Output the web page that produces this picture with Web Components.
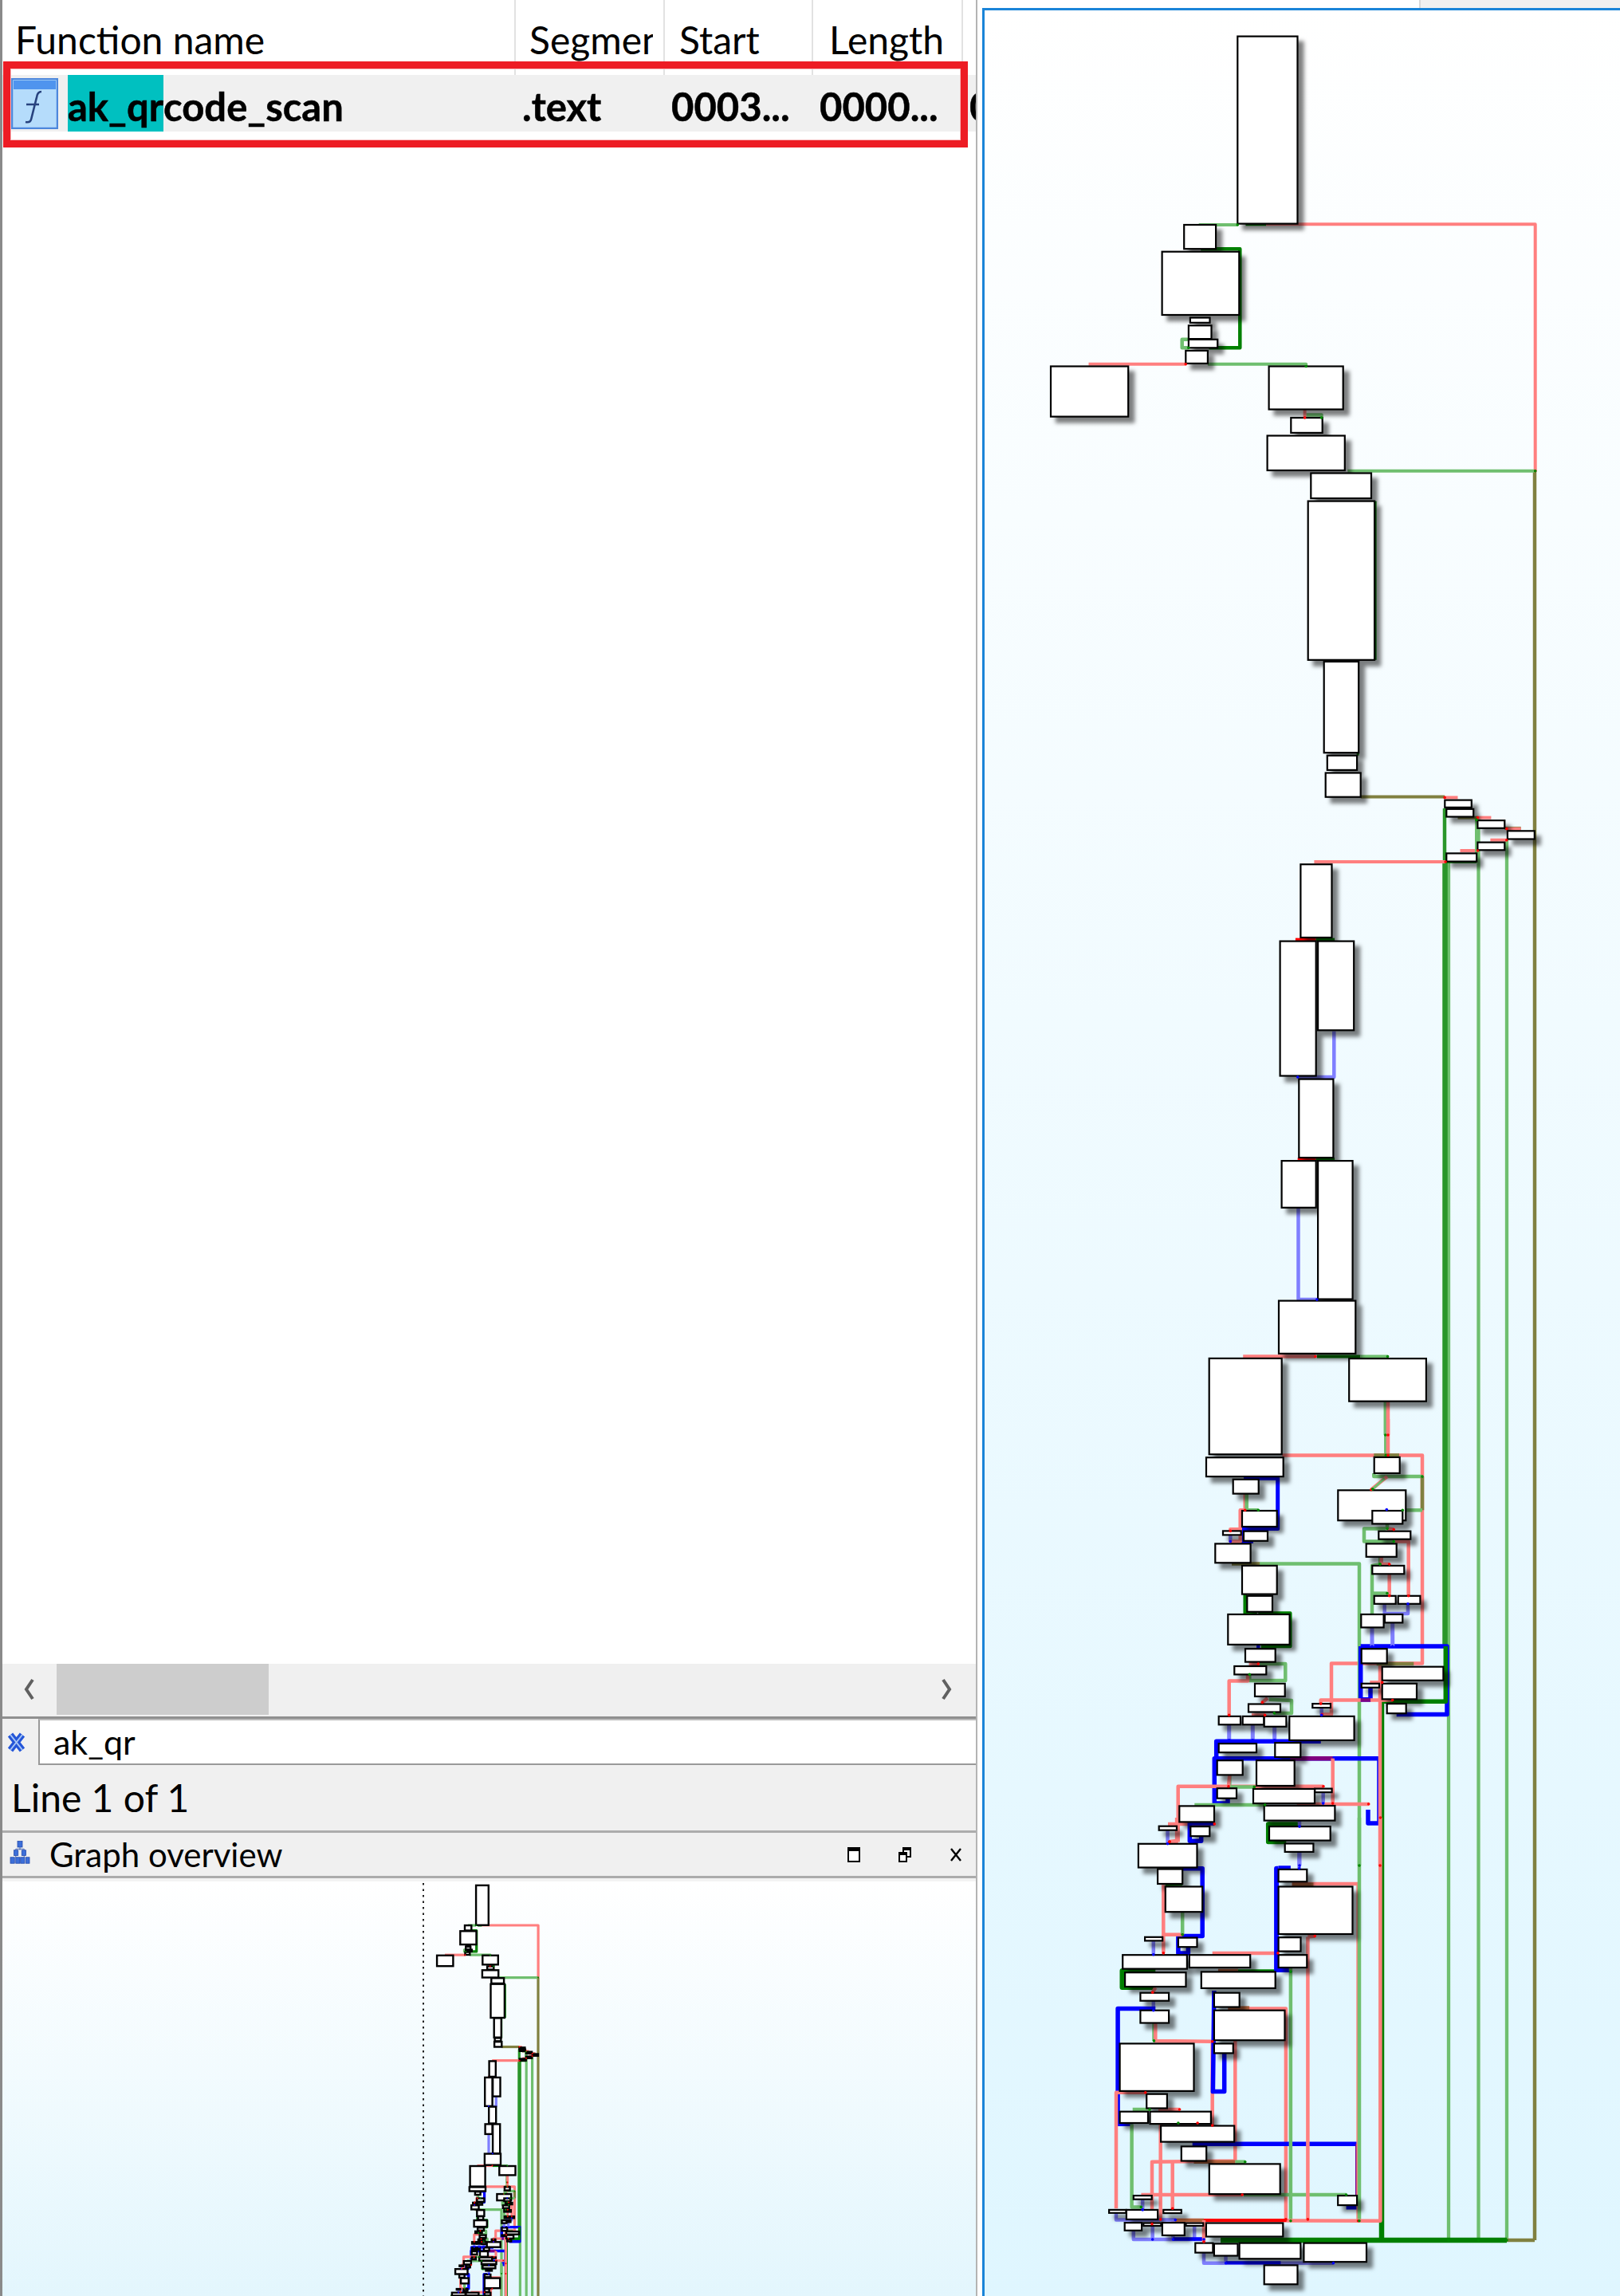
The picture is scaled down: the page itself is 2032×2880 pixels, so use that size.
<!DOCTYPE html>
<html><head><meta charset="utf-8">
<style>
html,body{margin:0;padding:0;background:#fff;}
body{width:2032px;height:2880px;overflow:hidden;display:flex;font-family:Lato,"Liberation Sans",sans-serif;color:#000;}
#left{width:1226px;height:2880px;display:flex;flex-direction:column;flex:none;box-sizing:border-box;border-left:3px solid #8a8a8a;border-right:2px solid #b4b4b4;}
</style></head><body>
<div id="left">
  <func-table>
    <func-row-head slot="head"></func-row-head>
  </func-table>
  <h-scroll></h-scroll>
  <filter-bar>ak_qr</filter-bar>
  <status-line>Line 1 of 1</status-line>
  <panel-title>Graph overview</panel-title>
  <flow-graph mode="overview"></flow-graph>
</div>
<graph-pane><flow-graph mode="main"></flow-graph></graph-pane>
<script>
const def=(name,html)=>customElements.define(name,class extends HTMLElement{constructor(){super();this.attachShadow({mode:'open'}).innerHTML=html;}});

def('func-row-head',`<style>
:host{display:grid;grid-template-columns:644px 187px 186px 188px 1fr;height:94px;font-size:48px;line-height:1;}
div{border-right:2px solid #e2e2e2;overflow:hidden;white-space:nowrap;padding:26px 0 0 18px;box-sizing:border-box;}
div:nth-of-type(1){padding-left:16px}
div:nth-of-type(2){padding-left:17px}
div:nth-of-type(2) span{display:block;width:155px;overflow:hidden;padding-bottom:12px;}
div:nth-of-type(4){padding-left:20px}
div:nth-of-type(5){border:0}
</style><div>Function name</div><div><span>Segment</span></div><div>Start</div><div>Length</div><div></div>`);

def('func-table',`<style>
:host{display:block;height:2087px;flex:none;position:relative;background:#fff;font-size:49px;}
.row{display:grid;grid-template-columns:644px 187px 186px 188px 1fr;height:71px;background:#f0f0f0;font-weight:700;line-height:78px;white-space:nowrap;overflow:hidden;-webkit-text-stroke:.5px #000;}
.row>div{padding-left:8px;overflow:hidden;}
.name{display:flex;padding-left:11px !important;align-items:stretch;}
.name svg{width:59px;height:64px;margin:4px 12px 0 0;flex:none;}
mark{background:#00c0c0;color:inherit;display:block;height:71px;}
.mark{position:absolute;left:1px;top:77px;width:1210px;height:108px;box-sizing:border-box;border:9px solid #ed1c24;outline:0;box-shadow:inset 0 0 0 1px #f7b9bb;}
</style><slot name="head"></slot>
<div class="row"><div class="name"><svg viewBox="0 0 59 64"><rect x="1" y="1" width="57" height="62" fill="#b5dcfb" stroke="#4d87dc" stroke-width="2.5"/><rect x="3" y="3" width="53" height="11" fill="#4f94ee"/><path d="M38 17Q33 17 32 24L25 52Q24 56 18 55M19 33H35" fill="none" stroke="#27427e" stroke-width="2.6"/></svg><mark>ak_qr</mark><span>code_scan</span></div><div>.text</div><div>0003...</div><div>0000...</div><div>0</div></div>
<div class="mark"></div>`);

def('h-scroll',`<style>
:host{display:flex;height:69px;flex:none;box-sizing:border-box;background:#f0f0f0;border-bottom:3px solid #8f8f8f;align-items:stretch;padding-bottom:2px;}
svg{width:68px;flex:none;}
.thumb{width:266px;background:#cdcdcd;flex:none}
.sp{flex:1}
</style><svg viewBox="0 0 68 64"><path d="M38 20L30 32L38 44" fill="none" stroke="#606060" stroke-width="4"/></svg><div class="thumb"></div><div class="sp"></div><svg viewBox="0 0 68 64"><path d="M27 20L35 32L27 44" fill="none" stroke="#606060" stroke-width="4"/></svg>`);

def('filter-bar',`<style>
:host{display:flex;height:58px;flex:none;background:#f0f0f0;align-items:stretch;font-size:43px;}
svg{width:45px;flex:none;}
.in{flex:1;background:#fff;border:2px solid #999;border-right:0;border-top-color:#bbb;box-sizing:border-box;padding-left:17px;line-height:54px;}
</style><svg viewBox="0 0 45 58"><path d="M10 20L25 39M25 20L10 39" stroke="#2456d8" stroke-width="8" fill="none"/><path d="M10 20L25 39M25 20L10 39" stroke="#a8c6f5" stroke-width="2" fill="none"/></svg><div class="in"><slot></slot></div>`);

def('status-line',`<style>
:host{display:block;height:82px;flex:none;box-sizing:border-box;background:#f0f0f0;font-size:48px;line-height:82px;padding-left:11px;}
</style><slot></slot>`);

def('panel-title',`<style>
:host{display:flex;height:60px;flex:none;box-sizing:border-box;background:#f0f0f0;border-top:3px solid #acacac;border-bottom:3px solid #acacac;align-items:center;font-size:42px;}
.ic{width:30px;height:30px;margin:0 22px 6px 7px;flex:none;}
.t{flex:1;line-height:54px;}
.b{display:flex;gap:0;align-items:center;}
.b svg{width:20px;height:20px;flex:none;}
</style><svg class="ic" viewBox="0 0 34 40"><g fill="#3d6fd9" stroke="#1f45a8" stroke-width="1"><rect x="13" y="2" width="8" height="10"/><rect x="7" y="17" width="7" height="9"/><rect x="20" y="17" width="7" height="9"/><rect x="1" y="29" width="7" height="10"/><rect x="10" y="29" width="7" height="10"/><rect x="18" y="29" width="7" height="10"/><rect x="27" y="29" width="6" height="10"/></g><path d="M17 12V17M10 26V29M24 26V29M10 17V15H24V17" stroke="#1f45a8" fill="none"/></svg><div class="t"><slot></slot></div><div class="b"><svg viewBox="0 0 20 20" style="margin-right:44px"><rect x="3" y="2" width="14" height="17" fill="#fff" stroke="#000" stroke-width="2"/><rect x="3" y="2" width="14" height="4"/></svg><svg viewBox="0 0 20 20" style="margin-right:44px"><rect x="8" y="2" width="9" height="11" fill="#fff" stroke="#000" stroke-width="2"/><rect x="8" y="2" width="9" height="3"/><rect x="3" y="8" width="9" height="11" fill="#fff" stroke="#000" stroke-width="2"/><rect x="3" y="8" width="9" height="3"/></svg><svg viewBox="0 0 20 20" style="margin-right:15px"><path d="M4 3L16 18M16 3L4 18" stroke="#000" stroke-width="2.4"/></svg></div>`);

def('graph-pane',`<style>
:host{display:block;flex:none;width:800px;height:2880px;margin-left:6px;padding-top:10px;box-sizing:border-box;position:relative;background:#fff;}
.tab{position:absolute;right:0;top:0;width:252px;height:10px;background:#f0f0f0;border-left:2px solid #d8d8d8;box-sizing:border-box;}
.f{box-sizing:border-box;height:2870px;border-left:3px solid #1a84d8;border-top:3px solid #1a84d8;background:linear-gradient(#fff,#dff6ff);overflow:hidden;}
</style><div class="tab"></div><div class="f"><slot></slot></div>`);

const Z={z4:[1230,0,1.955,1.4255],z5:[1400,1000,2.481,1.96],z6:[1360,1780,3,2.8],z7:[1360,2280,2.8,2.59],f:[0,0,1,1]};
const NODES={
z4:[[630,65,777,400],[499,402,577,445],[445,450,634,563],[514,568,562,577],[510,582,566,606],[510,607,581,622],[503,627,557,650],[172,655,362,745],[707,655,889,732],[761,747,838,774],[703,779,893,841],[810,846,958,891],[803,896,966,1180],[842,1183,927,1346],[850,1351,923,1377],[846,1382,932,1425]],
z5:[[574,165,671,345],[510,354,622,685],[628,354,740,573],[569,693,676,886],[515,894,622,1009],[628,894,736,1234],[506,1238,745,1368],[725,1380,965,1485],[1023,7,1106,25],[1028,29,1112,48],[1125,57,1209,76],[1218,83,1302,103],[1125,111,1209,130],[1028,138,1122,158]],
z6:[[470,-213,743,124],[459,135,749,202],[560,212,656,262],[594,322,725,378],[522,393,590,407],[600,394,690,428],[493,438,626,505],[594,515,725,615],[613,621,708,677],[541,686,773,792],[606,807,719,853],[565,868,685,897],[642,929,755,974],[618,1001,738,1029],[506,1044,588,1073],[596,1044,676,1073],[677,1044,760,1080],[772,1044,1016,1128],[506,1140,648,1171],[718,1137,814,1187],[500,1199,596,1250],[648,1199,791,1288],[500,1297,573,1332],[636,1299,867,1350],[868,1298,932,1311],[358,1359,489,1415],[677,1358,943,1410],[696,1431,926,1480],[755,1491,862,1520],[281,1430,348,1444],[400,1431,472,1465],[1091,134,1187,190],[955,250,1210,356],[1084,322,1198,368],[1108,394,1228,422],[1061,438,1175,484],[1084,515,1204,544],[1091,621,1172,649],[1181,621,1264,649],[1042,686,1127,732],[1131,686,1198,715],[1043,807,1139,858],[1121,870,1351,918],[1043,929,1110,943],[1121,929,1251,984],[1139,1000,1211,1034],[859,1000,927,1014]],
z7:[[190,85,396,162],[258,167,345,215],[285,224,415,306],[213,388,275,400],[330,390,396,420],[135,446,361,491],[369,446,583,487],[143,503,357,549],[411,501,671,554],[197,569,297,595],[197,626,297,667],[125,734,385,888],[219,898,291,944],[125,955,224,992],[231,955,445,995],[269,1001,527,1053],[341,1068,429,1115],[439,1125,688,1223],[173,1228,237,1240],[891,1228,958,1259],[87,1274,147,1284],[148,1274,258,1305],[278,1274,341,1285],[142,1316,202,1341],[208,1317,270,1326],[274,1316,352,1357],[357,1317,418,1326],[428,1317,698,1361],[390,1382,452,1413],[456,1384,539,1423],[545,1382,760,1433],[771,1382,991,1443],[632,1454,749,1516],[682,168,782,208],[682,224,942,378],[682,389,760,434],[682,446,782,487],[456,569,545,615],[456,626,704,723],[456,734,523,765]]
};
const C={r:'#ff7f7f',g:'#6fbf6f',b:'#7f7fff',B:'#0000ff',G:'#008000',o:'#808040',R:'#ff0000',p:'#800080',T:'#2a962a',n:'#b0603a'};
const EDGES=[
['f','g',2.8,'1817,1081 1817,2810'],['f','g',2.8,'1854.5,1025 1854.5,2810'],['f','g',2.8,'1890,1052 1890,2810'],
['f','o',3,'1925,590 1925,2810'],['f','T',3,'1812,1014 1812,1081'],['f','T',5,'1812.5,1081 1812.5,2065'],
['f','G',5,'1733,2134 1733,2810'],['f','G',5,'1531,2810 1890,2810'],['f','o',3,'1890,2810 1925,2810'],
['z4','g',2.5,'535,402 630,402'],['z4','G',2.5,'650,401 700,401'],['z4','r',2.5,'700,401 1360,401 1360,842'],['z4','g',2.5,'900,842 1360,842'],
['z4','G',3,'540,445 636,445 636,622 560,622'],['z4','g',3,'510,607 494,607 494,622 510,622'],
['z4','r',2.5,'265,651 503,651'],['z4','g',2.5,'557,651 798,651 798,655'],['z4','g',3,'798,742 836,742 836,747'],['z4','r',2.5,'795,732 795,747'],
['z4','o',2.5,'932,1425 1138,1425'],['z4','r',2.5,'1170,1426 1138,1426'],['z4','G',1.5,'968,896 968,1180'],['z4','G',1.5,'925,1183 925,1351'],
['z4','o',2.5,'1170,1462 1219,1462'],['z4','r',2.5,'1252,1462 1219,1462'],['z4','o',2.5,'1285,1481 1325,1481'],['z4','r',2.5,'1325,1482 1290,1482'],['z4','r',2.5,'1250,1502 1290,1502'],['z4','r',2.5,'1176,1521 1219,1521'],['z4','r',2.5,'818,1541 1140,1541'],
['z4','g',2.5,'1216,1540 1216,1466'],['z4','G',2,'1142,1541 1216,1541'],
['z5','R',2.5,'558,350 622,350'],['z5','G',2.5,'622,350 680,350'],['z5','R',2.5,'565,890 622,890'],['z5','G',2.5,'622,890 680,890'],
['z5','b',3,'678,575 678,688 565,688'],['z5','b',3,'567,1010 567,1235 625,1235'],
['z5','r',3,'395,1375 620,1375'],['z5','G',2.5,'625,1375 760,1375'],['z5','g',2.5,'760,1375 845,1375'],
['z5','g',3,'838,1485 838,1568'],['z5','r',3,'846,1485 846,1568'],
['z6','g',3,'1135,0 1135,127'],['z6','r',3,'1143,0 1143,127'],
['z6','r',3,'745,127 1272,127 1272,858 930,858 930,1037 895,1037'],['z6','o',3,'1090,127 1185,127'],
['z6','g',3,'1090,190 1090,202 1272,202'],['z6','o',3,'1272,202 1272,320'],['z6','g',3,'1272,320 1198,320'],
['z6','r',3,'1140,202 1080,248'],['z6','g',1.5,'1130,208 1085,246'],['z6','b',2,'1090,350 1138,318'],
['z6','B',3.5,'600,208 728,208 728,385 594,385 594,430 636,430'],
['z6','r',3,'605,262 605,320'],['z6','g',3,'611,262 611,320 655,320'],['z6','r',3,'605,320 587,320 587,430 550,430'],['z6','r',3,'587,387 550,387 550,393'],['z6','b',3,'550,407 550,430'],
['z6','g',3,'660,508 1035,508 1035,1568'],['z6','o',3,'555,508 660,508'],
['z6','G',3,'605,615 605,682 650,682'],['z6','G',3,'655,682 775,682 775,798 665,798'],['z6','B',3,'655,792 655,805'],
['z6','r',3,'620,860 655,860'],['z6','g',3,'660,860 757,860 757,918 622,918 622,897'],['z6','r',3,'615,897 615,920 545,920 545,1040'],
['z6','g',3,'695,985 780,988 780,1033 715,1033'],['z6','r',3,'690,980 670,995'],['z6','r',3,'630,1040 680,1040'],
['z6','b',3.5,'545,1073 545,1128'],['z6','b',3.5,'634,1073 634,1128'],['z6','b',3.5,'716,1080 716,1128'],
['z6','B',4,'890,1132 497,1132 497,1190'],['z6','B',4,'1110,1192 490,1192 490,1350 540,1350 540,1332'],['z6','B',4,'1110,1192 1110,1420 1068,1420 1068,1372'],['z6','p',4,'775,1192 935,1192'],
['z6','r',3,'935,1192 935,1350'],['z6','r',3,'353,1485 353,1290 900,1290'],['z6','r',3,'353,1485 320,1485'],['z6','r',3,'315,1422 490,1422'],
['z6','B',4,'490,1420 397,1420 397,1482 440,1482 440,1465'],
['z6','g',3,'415,1355 680,1355'],['z6','r',3,'800,1352 1070,1352'],['z6','g',3,'547,1250 547,1292 640,1292'],['z6','r',3,'547,1250 543,1290'],
['z6','G',4,'700,1422 692,1422 692,1485 760,1485'],['z6','G',4,'692,1422 810,1422'],['z6','b',3,'810,1410 810,1431'],['z6','b',3.5,'810,1520 810,1568'],['z6','b',3,'899,1311 899,1350'],
['z6','B',4,'1040,798 1365,798 1365,1037 1175,1037'],['z6','B',4,'1040,798 1040,985 1077,985 1077,943'],['z6','G',4,'1360,798 1360,992 1120,992'],['z6','p',3,'1040,987 1077,987'],
['z6','r',3,'1040,987 890,987 890,1000'],['z6','r',3,'1077,987 1160,987'],['z6','r',3,'1113,858 1113,1568'],['z6','o',3,'1100,860 1240,860'],
['z6','b',3.5,'1083,732 1083,798'],['z6','b',3.5,'1160,715 1160,798'],['z6','b',3,'1130,649 1130,683 1218,683 1218,649'],
['z6','g',3,'1083,686 1083,515 1113,510'],['z6','g',3,'1083,612 1140,612'],['z6','r',3,'1148,510 1148,621'],['z6','g',3,'1113,484 1113,510'],['z6','r',3,'1118,484 1118,510 1148,510'],
['z6','g',3,'1135,385 1053,385 1053,430 1165,430'],['z6','r',3,'1170,430 1220,430 1220,621'],['z6','r',3,'1140,385 1165,388'],['z6','g',3,'1140,368 1140,385'],
['z6','r',3,'1075,925 1121,925'],['z6','b',3,'893,1014 893,1040'],
['z7','B',4,'345,165 415,165 415,385 330,385 330,440 365,440 365,420'],['z7','r',3,'278,218 278,440'],['z7','r',3,'278,380 345,380'],['z7','g',3,'345,306 345,380'],['z7','b',3,'243,400 243,445'],['z7','G',2,'345,216 285,218'],
['z7','G',4.5,'143,497 133,497 133,552 245,552'],['z7','G',2.5,'133,497 250,497'],['z7','r',3,'250,552 240,568'],['z7','b',3,'243,595 243,626'],['z7','b',3,'293,39 293,85'],['z7','r',3,'325,0 325,75 300,78'],
['z7','B',4,'250,620 118,620 118,995 170,995'],['z7','g',3,'245,667 245,725'],['z7','r',3,'250,667 250,725 450,727'],['z7','r',3,'450,727 450,1000'],['z7','r',3,'450,440 680,440'],['z7','n',3,'470,497 540,497'],['z7','G',2,'540,497 725,497'],
['z7','r',3,'112,1270 112,893 215,893'],['z7','g',3,'167,995 167,1265 200,1265'],['z7','g',3,'170,948 230,948'],['z7','r',3,'260,948 335,948'],['z7','g',3,'240,992 330,992'],['z7','r',3,'340,992 398,992'],['z7','r',3,'268,995 268,1305'],
['z7','B',4,'456,562 452,890 492,890 492,765'],['z7','r',3,'505,620 708,620 708,1305'],['z7','n',3,'505,618 580,618'],
['z7','r',3,'530,725 530,1115 238,1118 238,1320'],['z7','r',3,'310,1118 310,1270'],['z7','n',3,'385,1118 530,1118'],['z7','g',3,'530,1118 565,1118'],['z7','r',3,'200,1225 555,1225'],['z7','g',3,'560,1225 920,1225'],
['z7','B',4,'380,1060 960,1060 960,1225'],['z7','p',4,'960,1060 960,1225'],['z7','B',4,'960,1225 960,1266 920,1266'],
['z7','g',3,'725,497 725,1310'],['z7','r',3,'785,387 785,1305'],['z7','r',3,'785,387 810,385'],['z7','B',4.5,'682,165 675,165 675,495 730,495'],['z7','B',3,'682,162 725,162'],['z7','r',3,'730,215 962,215 962,1310'],['z7','g',3,'966,0 966,1310'],['z7','n',3,'730,217 805,217'],
['z7','r',3,'305,1308 1040,1310 1040,0'],['z7','R',2.5,'420,1308 710,1308'],['z7','n',3,'310,1308 420,1308'],
['z7','b',3,'173,1340 173,1370 420,1370'],['z7','b',3,'240,1326 240,1370'],['z7','b',3,'312,1357 312,1370'],['z7','b',3,'387,1326 387,1370'],['z7','B',3,'312,1369 415,1369'],['z7','r',3,'420,1308 420,1378'],
['z7','b',3,'420,1413 420,1447 875,1447'],['z7','b',3,'497,1423 497,1447'],['z7','B',2.5,'497,1446 690,1446'],['z7','b',3,'755,111 755,165'],
['z7','b',3,'205,1240 205,1274'],['z7','b',3,'112,1284 112,1307 320,1307'],['z7','g',3,'725,445 725,500'],
];
function mapPt(z,x,y){const a=Z[z];return [a[0]+x/a[2],a[1]+y/a[3]];}
customElements.define('flow-graph',class extends HTMLElement{
 constructor(){super();this.attachShadow({mode:'open'});}
 connectedCallback(){
  const ov=this.getAttribute('mode')==='overview';
  const P=ov?(x,y)=>[594+(x-1552)*.209,5+(y-46)*.2123]:(x,y)=>[x-1235,y-13];
  let e='',n='',h='';
  for(const [z,c,w,pts] of EDGES){
    const ps=pts.split(' ').map(p=>{const [x,y]=p.split(',').map(Number);return P(...mapPt(z,x,y));});
    const sw=ov?Math.max(3.2,w*.85):w+1.5;
    e+=`<polyline points="${ps.map(p=>p[0].toFixed(1)+','+p[1].toFixed(1)).join(' ')}" fill="none" stroke="${C[c]}" stroke-width="${sw}" stroke-linejoin="round"/>`;
    if('rgb'.includes(c)){const l=ps[ps.length-1];h+=`<circle cx="${l[0].toFixed(1)}" cy="${l[1].toFixed(1)}" r="${ov?1:1.8}" fill="${c==='r'?'#f00':c==='g'?'#080':'#00f'}"/>`;}
  }
  for(const z in NODES)for(const [a,b,c,d] of NODES[z]){
    const [x0,y0]=P(...mapPt(z,a,b)),[x1,y1]=P(...mapPt(z,c,d));
    n+=`<rect x="${x0.toFixed(1)}" y="${y0.toFixed(1)}" width="${(x1-x0).toFixed(1)}" height="${(y1-y0).toFixed(1)}" fill="#fff" stroke="#000" stroke-width="${ov?2.4:2.2}"/>`;
  }
  const w=ov?1221:797,hh=ov?522:2867;
  this.shadowRoot.innerHTML=`<style>
  :host{display:block;${ov?'flex:1;min-height:0;background:linear-gradient(#fff,#e3f6fd);border-top:4px solid #f3f3f3;box-sizing:border-box;':''}width:${w}px;height:${hh}px;overflow:hidden;}
  svg{display:block;filter:blur(.6px);}
  </style><svg width="${w}" height="${hh}" viewBox="0 0 ${w} ${hh}">
  <defs><filter id="s" x="-20%" y="-20%" width="150%" height="150%"><feDropShadow dx="${ov?1.2:7}" dy="${ov?1.2:7}" stdDeviation="${ov?.7:2.6}" flood-color="#000" flood-opacity=".5"/></filter></defs>
  ${ov?`<line x1="528" y1="2" x2="528" y2="${hh}" stroke="#222" stroke-width="2" stroke-dasharray="2.5 5"/>`:''}
  ${e}<g ${ov?'':'filter="url(#s)"'}>${n}</g>${h}</svg>`;
 }
});
</script>
</body></html>
